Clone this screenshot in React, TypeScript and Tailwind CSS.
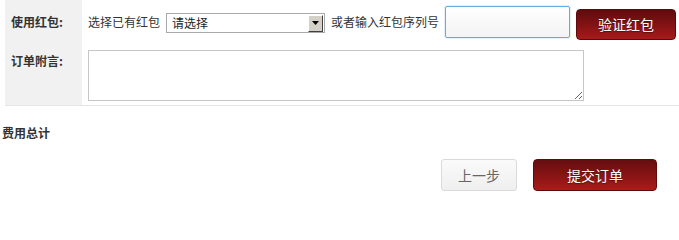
export default function App() {
  return (
    <div className="w-[679px] h-[201px] bg-white text-[12px] text-[#333] font-['Noto_Sans_CJK_SC','Noto_Sans',sans-serif] overflow-hidden">
      {/* Form table */}
      <div className="ml-[5px] border-b border-[#e6e6e6]">
        <div className="flex h-[44px]">
          <div className="w-[77px] shrink-0 bg-[#f1f1f1] pl-[6px] flex items-center font-bold leading-none">使用红包:</div>
          <div className="flex items-center pl-[6px] leading-none">
            <span className="w-[72px] whitespace-nowrap">选择已有红包</span>
            <div className="ml-[6px] mt-[2px] w-[159px] h-[20px] border border-[#a9a9a9] flex items-center justify-between bg-white">
              <span className="pl-[5px] text-[#222]">请选择</span>
              <div className="w-[15px] h-[17px] mr-px bg-[#d4d0c8] border border-t-white border-l-white border-r-[#404040] border-b-[#404040] flex items-center justify-center">
                <svg width="7" height="4" viewBox="0 0 7 4"><path d="M0 0h7L3.5 4z" fill="#000" /></svg>
              </div>
            </div>
            <span className="ml-[6px] whitespace-nowrap">或者输入红包序列号</span>
            <div className="ml-[6px] w-[125px] h-[32px] border-[1.5px] border-[#62acdf] rounded-[2px] bg-gradient-to-b from-white to-[#f3f3f3] shadow-[0_0_2px_rgba(98,172,223,0.6)]" />
            <button className="ml-[6px] mt-[4px] w-[100px] h-[31px] rounded-[4px] border border-[#5c0a0c] bg-gradient-to-b from-[#5e0b0e] to-[#a81a1a] text-white text-[14px] leading-none [text-shadow:0_1px_1px_rgba(0,0,0,0.4)]">
              验证红包
            </button>
          </div>
        </div>
        <div className="flex h-[61px]">
          <div className="w-[77px] shrink-0 bg-[#f1f1f1] pl-[6px] pt-[11px] font-bold leading-none">订单附言:</div>
          <div className="pl-[6px] pt-[6px]">
            <textarea className="block w-[496px] h-[51px] border border-[#c6c6c6] resize bg-white outline-none" />
          </div>
        </div>
      </div>

      {/* Summary */}
      <div className="pl-[2px] pt-[21px] font-bold leading-none">费用总计</div>

      <div className="flex justify-end gap-[16px] pr-[22px] pt-[20px]">
        <button className="w-[76px] h-[32px] rounded-[3px] border border-[#dadada] bg-gradient-to-b from-[#fafafa] to-[#efefef] text-[#666] text-[14px] leading-none">
          上一步
        </button>
        <button className="w-[124px] h-[32px] rounded-[4px] border border-[#5c0a0c] bg-gradient-to-b from-[#650d10] to-[#ab1b19] text-white text-[14px] leading-none [text-shadow:0_1px_1px_rgba(0,0,0,0.4)]">
          提交订单
        </button>
      </div>
    </div>
  );
}
